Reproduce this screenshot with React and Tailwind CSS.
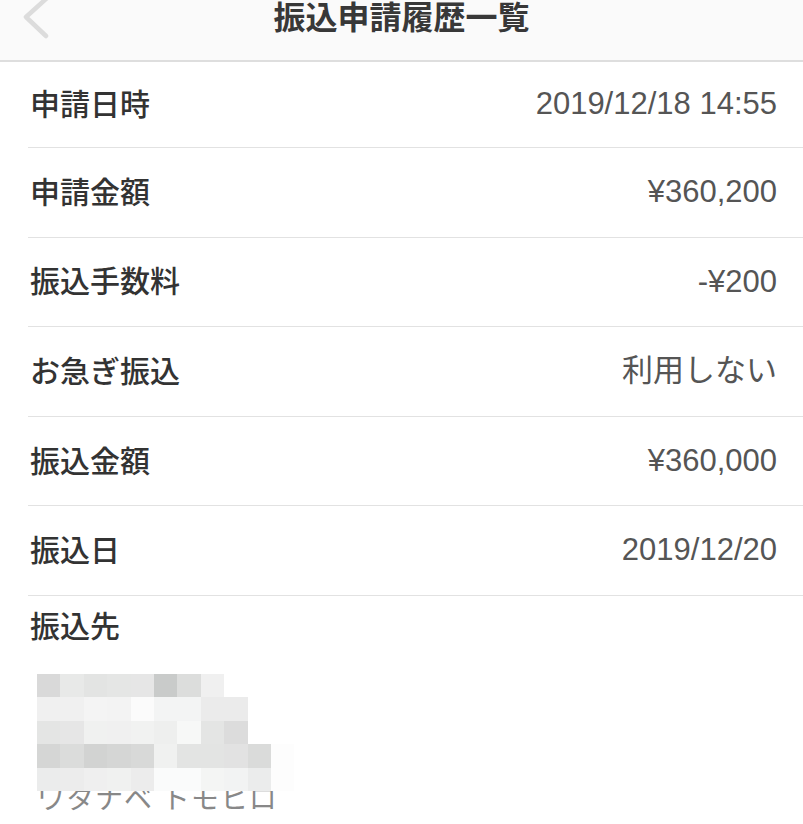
const rows = [
  { label: "申請日時", value: "2019/12/18 14:55" },
  { label: "申請金額", value: "¥360,200" },
  { label: "振込手数料", value: "-¥200" },
  { label: "お急ぎ振込", value: "利用しない" },
  { label: "振込金額", value: "¥360,000" },
  { label: "振込日", value: "2019/12/20" },
];

// pixelated (blurred) account details
const mosaic = [
  ["#d9d9d9", "#e8e9e8", "#e3e4e3", "#e5e6e5", "#e6e6e6", "#c9cbca", "#dcdddc", "#f0f0f0"],
  ["#f0f0f0", "#f0f0f0", "#f4f4f4", "#f3f3f3", "#fbfbfb", "#f3f4f4", "#f3f4f4", "#ebebeb", "#ebebeb"],
  ["#e4e5e4", "#e6e6e6", "#f0f1f0", "#f0f0f0", "#f1f2f1", "#eeefee", "#f7f8f7", "#e4e5e4", "#dcdcdc"],
  ["#d5d6d5", "#dbdcdb", "#d2d3d2", "#d5d6d5", "#d8d9d8", "#f0f1f0", "#e3e4e3", "#e3e4e3", "#e2e2e2", "#dadbda", "#fdfdfd"],
  ["#ebecec", "#ececec", "#efefef", "#f0f1f0", "#ececec", "#fafbfb", "#fafbfb", "#f4f5f4", "#f2f3f3", "#ebecec", "#fdfdfd"],
];

const font = { fontFamily: '"Liberation Sans", "Noto Sans CJK JP", sans-serif' };

export default function App() {
  return (
    <div className="h-[824px] w-[803px] overflow-hidden bg-white" style={font}>
      <header className="relative flex h-[62px] justify-center border-b-2 border-[#dedede] bg-[#fafafa]">
        <svg className="absolute left-[18px] top-[-4px]" width="36" height="46" viewBox="0 0 36 46">
          <path d="M29 2 L8 21 L28 40" fill="none" stroke="#dcdcdc" strokeWidth="4.5" strokeLinecap="round" strokeLinejoin="round" />
        </svg>
        <h1 className="text-[32px] font-bold leading-[36px] text-[#383838]">振込申請履歴一覧</h1>
      </header>

      <div className="pl-[28px]">
        {rows.map((r, i) => (
          <div
            key={r.label}
            className={`flex items-center justify-between border-b border-[#e2e2e2] pl-[2px] pr-[26px] ${
              i === 0 ? "h-[86px]" : "h-[89.6px]"
            }`}
          >
            <span className="text-[30px] font-medium text-[#333]">{r.label}</span>
            <span className="text-[31px] text-[#555]">{r.value}</span>
          </div>
        ))}

        <div className="pl-[2px] pt-[13px]">
          <p className="text-[30px] font-medium leading-[36px] text-[#333]">振込先</p>
          <div className="relative z-10 mt-[29px] flex flex-col pl-[7px]">
            {mosaic.map((row, ri) => (
              <div key={ri} className="flex h-[23.4px]">
                {row.map((c, ci) => (
                  <div key={ci} className="h-full w-[23.4px]" style={{ backgroundColor: c }} />
                ))}
              </div>
            ))}
          </div>
          <p className="-mt-[7px] pl-[7px] text-[28px] leading-[32px] tracking-[1px] text-[#888]">
            ワタナベ トモヒロ
          </p>
        </div>
      </div>
    </div>
  );
}
